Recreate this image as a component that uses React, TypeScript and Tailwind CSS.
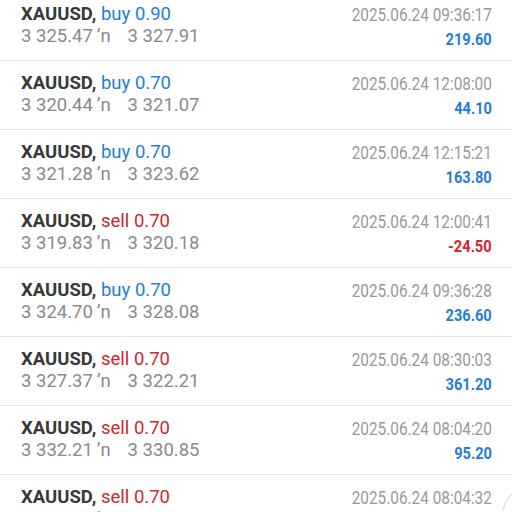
import React from "react";

type Deal = {
  side: "buy" | "sell";
  volume: string;
  open: string;
  close: string;
  time: string;
  profit: string;
};

const deals: Deal[] = [
  { side: "buy", volume: "0.90", open: "3 325.47", close: "3 327.91", time: "2025.06.24 09:36:17", profit: "219.60" },
  { side: "buy", volume: "0.70", open: "3 320.44", close: "3 321.07", time: "2025.06.24 12:08:00", profit: "44.10" },
  { side: "buy", volume: "0.70", open: "3 321.28", close: "3 323.62", time: "2025.06.24 12:15:21", profit: "163.80" },
  { side: "sell", volume: "0.70", open: "3 319.83", close: "3 320.18", time: "2025.06.24 12:00:41", profit: "-24.50" },
  { side: "buy", volume: "0.70", open: "3 324.70", close: "3 328.08", time: "2025.06.24 09:36:28", profit: "236.60" },
  { side: "sell", volume: "0.70", open: "3 327.37", close: "3 322.21", time: "2025.06.24 08:30:03", profit: "361.20" },
  { side: "sell", volume: "0.70", open: "3 332.21", close: "3 330.85", time: "2025.06.24 08:04:20", profit: "95.20" },
  { side: "sell", volume: "0.70", open: "3 331.02", close: "3 330.10", time: "2025.06.24 08:04:32", profit: "64.40" },
];

function DealRow({ deal }: { deal: Deal }) {
  const loss = deal.profit.startsWith("-");
  return (
    <div className="flex h-[69px] shrink-0 items-start justify-between border-t border-[#e4e4e4] pl-[21px] pr-[20px] pt-[11px]">
      <div className="flex flex-col">
        <div className="h-[22px] text-[18.5px] leading-[22px]">
          <span className="font-bold text-[#383838]">XAUUSD, </span>
          <span className={deal.side === "buy" ? "text-[#1f7ed8]" : "text-[#cf2530]"}>
            {deal.side} {deal.volume}
          </span>
        </div>
        <div className="h-[22px] text-[18.5px] leading-[22px] text-[#8a8a8a]">
          {deal.open}
          <span className="ml-[4px] mr-[17px]">ʼn</span>
          {deal.close}
        </div>
      </div>
      <div className="flex flex-col items-end">
        <div className="h-[22px] pt-[1px] text-[18.5px] leading-[22px] text-[#999999]">
          <span className="inline-block origin-right scale-x-[0.83]">{deal.time}</span>
        </div>
        <div className="h-[22px] pt-[3px] text-[17px] font-bold leading-[22px]">
          <span className={`inline-block origin-right scale-x-[0.86] ${loss ? "text-[#cf2530]" : "text-[#1f7ed8]"}`}>
            {deal.profit}
          </span>
        </div>
      </div>
    </div>
  );
}

export default function App() {
  return (
    <div className="relative h-[512px] w-[512px] overflow-hidden bg-white font-['Roboto',sans-serif]">
      <div className="-mt-[9px] flex flex-col">
        {deals.map((d, i) => (
          <DealRow key={i} deal={d} />
        ))}
      </div>
      <svg className="absolute bottom-0 right-0" width="10" height="20" viewBox="0 0 10 20">
        <path d="M1 19 Q3 8 10 2" stroke="#e2e2e2" strokeWidth="1.5" fill="none" />
      </svg>
    </div>
  );
}
